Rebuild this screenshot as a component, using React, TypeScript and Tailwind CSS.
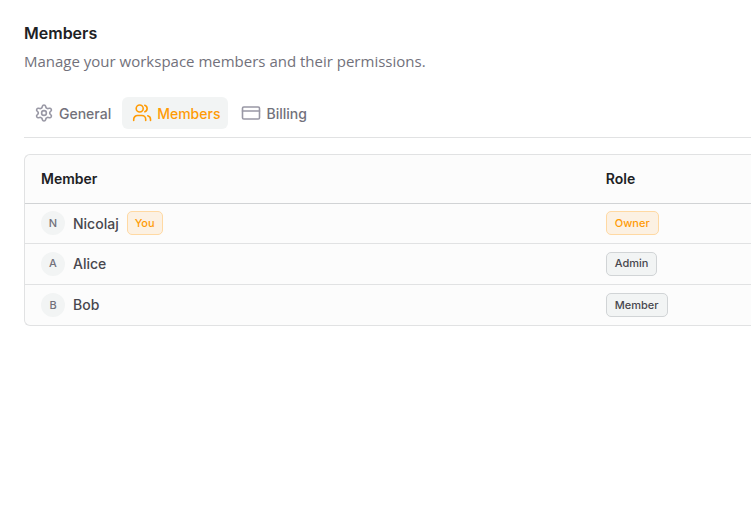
const tabs = ["General", "Members", "Billing"];

const members = [
  { name: "Nicolaj", role: "Owner", you: true },
  { name: "Alice", role: "Admin", you: false },
  { name: "Bob", role: "Member", you: false },
];

const amberBadge = "border-[#ffd9a3] bg-[#fcf1e3] text-[#ff9b05]";
const grayBadge = "border-[#d1d4d6] bg-[#f2f4f4] text-[#48474e]";

function Badge({ label, amber }: { label: string; amber: boolean }) {
  return (
    <span
      className={`inline-flex h-6 items-center rounded-[5px] border text-[11px] font-medium ${
        label === "You" ? "px-[7px]" : "px-2"
      } ${amber ? amberBadge : grayBadge}`}
    >
      {label}
    </span>
  );
}

function TabIcon({ name }: { name: string }) {
  return (
    <svg
      width="20"
      height="20"
      viewBox="0 0 20 20"
      fill="none"
      stroke="currentColor"
      strokeWidth="1.6"
      strokeLinecap="round"
      strokeLinejoin="round"
      className={name === "Members" ? "text-[#ff9b05]" : "text-[#9998a5]"}
      aria-hidden="true"
    >
      {name === "General" && (
        <>
          <circle cx="10" cy="10" r="2.4" />
          <path d="M8.4 3.2Q8.7 2 10 2t1.6 1.2l.3 1.1q.2.7.9 1l.2.1q.6.4 1.3.2l1.1-.3q1.1-.3 1.8.8.6 1.1-.2 1.9l-.8.8q-.5.5-.5 1.2t.5 1.2l.8.8q.8.8.2 1.9-.7 1.1-1.8.8l-1.1-.3q-.7-.2-1.3.2l-.2.1q-.7.3-.9 1l-.3 1.1Q11.3 18 10 18t-1.6-1.2l-.3-1.1q-.2-.7-.9-1l-.2-.1q-.6-.4-1.3-.2l-1.1.3q-1.1.3-1.8-.8-.6-1.1.2-1.9l.8-.8q.5-.5.5-1.2T3.8 8.8L3 8q-.8-.8-.2-1.9.7-1.1 1.8-.8l1.1.3q.7.2 1.3-.2l.2-.1q.7-.3.9-1z" />
        </>
      )}
      {name === "Members" && (
        <>
          <circle cx="7.7" cy="5.5" r="3.5" />
          <path d="M1.7 17.5v-1.2a3.8 3.8 0 0 1 3.8-3.8h4.4a3.8 3.8 0 0 1 3.8 3.8v1.2M12.8 2.2a3.5 3.5 0 0 1 0 6.6M15.8 12.7a3.8 3.8 0 0 1 2.7 3.6v1.2" />
        </>
      )}
      {name === "Billing" && (
        <>
          <rect x="1.5" y="4" width="17" height="12" rx="1.3" />
          <path d="M1.5 8h17" />
        </>
      )}
    </svg>
  );
}

export default function App() {
  return (
    <main className="min-h-screen overflow-hidden bg-white pt-[23px] pl-6 font-['Inter',sans-serif] text-[#202124]">
      <h1 className="text-[16px] leading-5 font-semibold">Members</h1>
      <p className="mt-2 font-['Open_Sans',sans-serif] text-[15px] leading-5 text-[#72717b]">
        Manage your workspace members and their permissions.
      </p>

      {/* Tabs */}
      <nav className="mt-[26px] flex gap-[3px] border-b border-[#e1e2e3] pb-2">
        {tabs.map((label) => (
          <button
            key={label}
            type="button"
            className={`flex h-8 items-center gap-[5px] rounded-md pr-2 pl-2.5 text-[14px] font-medium ${
              label === "Members" ? "bg-[#f2f4f4] text-[#ff9b05]" : "text-[#72717b]"
            }`}
          >
            <TabIcon name={label} />
            {label}
          </button>
        ))}
      </nav>

      {/* Members table */}
      <div className="mt-4 overflow-hidden rounded-l-md border border-r-0 border-[#e1e2e3] bg-[#fcfcfc]">
        <table className="w-full table-fixed border-collapse text-left text-[14px]">
          <thead>
            <tr className="h-12 border-b border-[#d1d3d5]">
              <th className="w-4/5 pl-4 font-semibold">Member</th>
              <th className="font-semibold">Role</th>
            </tr>
          </thead>
          <tbody>
            {members.map((member) => (
              <tr key={member.name} className="h-[41px] border-b border-[#e1e2e3] first:h-10 last:border-0">
                <td className="pl-4">
                  <div className="flex items-center gap-2 font-medium text-[#48474e]">
                    <span className="grid size-6 place-items-center rounded-full bg-[#f2f4f4] text-[11px] text-[#72717b]">
                      {member.name[0]}
                    </span>
                    {member.name}
                    {member.you && <Badge label="You" amber />}
                  </div>
                </td>
                <td>
                  <Badge label={member.role} amber={member.role === "Owner"} />
                </td>
              </tr>
            ))}
          </tbody>
        </table>
      </div>
    </main>
  );
}
